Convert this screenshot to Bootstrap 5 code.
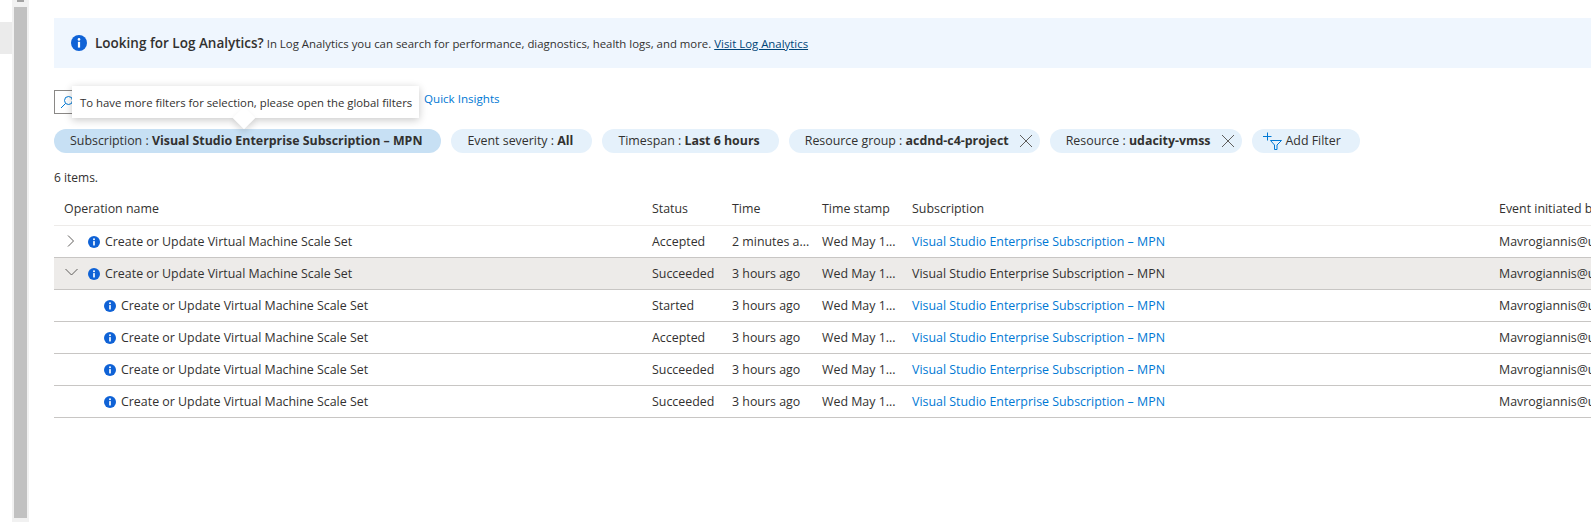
<!DOCTYPE html>
<html lang="en">
  <head>
    <meta charset="UTF-8" />
    <title>Activity log</title>
    <link href="https://cdn.jsdelivr.net/npm/bootstrap@5.3.0/dist/css/bootstrap.min.css" rel="stylesheet" />
    <style>
      body {
        height: 522px;
        overflow: hidden;
        background: #fff;
        color: #323130;
        font-family: "Open Sans", "Liberation Sans", sans-serif;
        font-size: 12.4px;
      }
      .side-nav {
        width: 12px;
        padding-top: 22px;
      }
      .side-item {
        height: 32px;
        background: #ebebeb;
      }
      .scroll-track {
        width: 17px;
        height: 522px;
        background: #f1f1f1;
        padding: 0 2px 4px 2px;
      }
      .scroll-up {
        width: 7px;
        height: 2px;
        margin: 0 auto 5px auto;
        background: #a3a3a3;
      }
      .scroll-thumb {
        background: #c1c1c1;
      }
      .main-pane {
        min-width: 0;
        padding: 18px 0 0 25px;
      }
      .info-banner {
        height: 50px;
        background: #eff6fe;
        padding-left: 17px;
        gap: 8px;
        font-size: 11.4px;
      }
      .info-banner b {
        font-size: 13.5px;
        font-weight: 600;
      }
      .info-banner a {
        color: #004578;
      }
      .search-row {
        position: relative;
        margin-top: 22px;
        height: 24px;
      }
      .search-box {
        width: 300px;
        height: 24px;
        border: 1px solid #8a8886;
        padding-left: 5px;
      }
      .insights-icon {
        margin-left: 52px;
        margin-right: 4px;
        margin-bottom: 8px;
      }
      .insights-link {
        margin-bottom: 6px;
        color: #0078d4;
        font-size: 11.6px;
        text-decoration: none;
      }
      .filter-tip {
        position: absolute;
        left: 18px;
        top: -4px;
        width: 347px;
        height: 32px;
        background: #fff;
        box-shadow: 0 2px 8px rgba(0, 0, 0, 0.22);
        padding-left: 8px;
        font-size: 11.35px;
        line-height: 33px;
        white-space: nowrap;
        z-index: 2;
      }
      .filter-tip::after {
        content: "";
        position: absolute;
        left: 164px;
        bottom: -8px;
        width: 16px;
        height: 16px;
        background: #fff;
        transform: rotate(45deg);
        box-shadow: 3px 3px 6px rgba(0, 0, 0, 0.12);
        z-index: -1;
      }
      .chip-row {
        margin-top: 15px;
        gap: 10px;
      }
      .chip {
        height: 24px;
        border-radius: 12px;
        background: #e5f1fb;
        padding: 0 19px 0 16px;
        white-space: nowrap;
      }
      .chip b {
        font-weight: 700;
      }
      .chip-on {
        background: #c7e0f4;
      }
      .chip-x {
        margin-left: 10px;
        margin-right: -12px;
      }
      .chip-add {
        padding-left: 11px;
        gap: 3px;
      }
      .items-count {
        margin-top: 17px;
        font-size: 12px;
        line-height: 16px;
      }
      .table-clip {
        margin-top: 5px;
        overflow: hidden;
      }
      .ops-table {
        table-layout: fixed;
        width: 1700px;
        margin: 0;
        font-size: 12.4px;
        --bs-table-color: #323130;
      }
      .ops-table th,
      .ops-table td {
        padding: 3px 10px 0 10px;
        height: 32px;
        vertical-align: middle;
        white-space: nowrap;
        overflow: hidden;
        border-bottom: 1px solid #c8c6c4;
      }
      .ops-table th {
        font-weight: 500;
        height: 34px;
        border-bottom-color: #edebe9;
      }
      .ops-table tr.row-open td {
        --bs-table-bg: #edebe9;
        background: #edebe9;
      }
      .ops-table a {
        color: #0078d4;
        text-decoration: none;
      }
      .ops-table tr.row-open a {
        color: #323130;
      }
      .op-cell {
        gap: 5px;
      }
      .op-toggle {
        width: 16px;
        margin-right: 3px;
      }
      .op-child {
        padding-left: 40px;
      }
      .info-dot {
        flex: none;
      }
    </style>
  </head>
  <body>
    <svg width="0" height="0" class="d-none">
      <symbol id="info" viewBox="0 0 16 16">
        <circle cx="8" cy="8" r="8" fill="#0f62d6" />
        <rect x="6.9" y="6.8" width="2.2" height="5.8" fill="#fff" />
        <circle cx="8" cy="4.4" r="1.3" fill="#fff" />
      </symbol>
    </svg>
    <div class="d-flex">
      <div class="side-nav flex-shrink-0"><div class="side-item"></div></div>
      <div class="scroll-track flex-shrink-0 d-flex flex-column">
        <div class="scroll-up"></div>
        <div class="scroll-thumb flex-grow-1"></div>
      </div>
      <div class="main-pane flex-grow-1">
        <div class="info-banner d-flex align-items-center">
          <svg class="info-dot" width="16" height="16"><use href="#info" /></svg>
          <span><b>Looking for Log Analytics?</b> In Log Analytics you can search for performance, diagnostics, health logs, and more. <a href="#">Visit Log Analytics</a></span>
        </div>

        <div class="search-row d-flex align-items-center">
          <div class="search-box d-flex align-items-center">
            <svg width="14" height="14" viewBox="0 0 14 14" fill="none" stroke="#0078d4" stroke-width="1">
              <circle cx="8.5" cy="5.5" r="4" />
              <path d="M5.5 8.5 1 13" />
            </svg>
          </div>
          <svg class="insights-icon" width="14" height="14" viewBox="0 0 14 14" fill="none" stroke="#0078d4"><path d="M3 3h10M3 7h10M3 11h10" stroke-dasharray="2 2" /></svg>
          <a class="insights-link" href="#">Quick Insights</a>
          <div class="filter-tip">To have more filters for selection, please open the global filters</div>
        </div>

        <div class="chip-row d-flex">
          <div class="chip chip-on d-flex align-items-center"><span>Subscription : <b>Visual Studio Enterprise Subscription – MPN</b></span></div>
          <div class="chip d-flex align-items-center"><span>Event severity : <b>All</b></span></div>
          <div class="chip d-flex align-items-center"><span>Timespan : <b>Last 6 hours</b></span></div>
          <div class="chip d-flex align-items-center">
            <span>Resource group : <b>acdnd-c4-project</b></span>
            <svg class="chip-x" width="14" height="14" viewBox="0 0 14 14" stroke="#605e5c" fill="none"><path d="M1 1 13 13M13 1 1 13" /></svg>
          </div>
          <div class="chip d-flex align-items-center">
            <span>Resource : <b>udacity-vmss</b></span>
            <svg class="chip-x" width="14" height="14" viewBox="0 0 14 14" stroke="#605e5c" fill="none"><path d="M1 1 13 13M13 1 1 13" /></svg>
          </div>
          <div class="chip chip-add d-flex align-items-center">
            <svg width="20" height="18" viewBox="0 0 20 18" fill="none" stroke="#0078d4"><path d="M0 4.5h8.5M4.5 .5v8" /><path d="M7.5 8.5h11l-4.5 4.5v4.5h-2.5v-4.5z" /></svg>
            <span>Add Filter</span>
          </div>
        </div>

        <div class="items-count">6 items.</div>

        <div class="table-clip">
          <table class="table ops-table">
            <colgroup>
              <col style="width: 588px" />
              <col style="width: 80px" />
              <col style="width: 90px" />
              <col style="width: 90px" />
              <col style="width: 587px" />
              <col style="width: 265px" />
            </colgroup>
            <thead>
              <tr>
                <th>Operation name</th>
                <th>Status</th>
                <th>Time</th>
                <th>Time stamp</th>
                <th>Subscription</th>
                <th>Event initiated by</th>
              </tr>
            </thead>
            <tbody id="opsBody"></tbody>
          </table>
        </div>
      </div>
    </div>

    <script>
      // 표 행 데이터
      const rows = [
        { kind: "closed", status: "Accepted", time: "2 minutes a..." },
        { kind: "open", status: "Succeeded", time: "3 hours ago" },
        { kind: "child", status: "Started", time: "3 hours ago" },
        { kind: "child", status: "Accepted", time: "3 hours ago" },
        { kind: "child", status: "Succeeded", time: "3 hours ago" },
        { kind: "child", status: "Succeeded", time: "3 hours ago" },
      ];
      const chevrons = {
        closed: '<path d="M4 0.5 9.5 6 4 11.5" />',
        open: '<path d="M1.5 2 7.5 8 13.5 2" />',
      };
      document.getElementById("opsBody").innerHTML = rows
        .map((r) => {
          const toggle = chevrons[r.kind]
            ? `<svg class="op-toggle" width="16" height="14" viewBox="0 0 16 14" fill="none" stroke="#605e5c">${chevrons[r.kind]}</svg>`
            : "";
          return `<tr class="${r.kind === "open" ? "row-open" : ""}">
            <td><div class="op-cell d-flex align-items-center ${r.kind === "child" ? "op-child" : ""}">${toggle}<svg class="info-dot" width="12" height="12"><use href="#info" /></svg><span>Create or Update Virtual Machine Scale Set</span></div></td>
            <td>${r.status}</td>
            <td>${r.time}</td>
            <td>Wed May 1...</td>
            <td><a href="#">Visual Studio Enterprise Subscription – MPN</a></td>
            <td>Mavrogiannis@udacity.com</td>
          </tr>`;
        })
        .join("");
    </script>
    <script src="https://cdn.jsdelivr.net/npm/bootstrap@5.3.0/dist/js/bootstrap.bundle.min.js"></script>
  </body>
</html>
